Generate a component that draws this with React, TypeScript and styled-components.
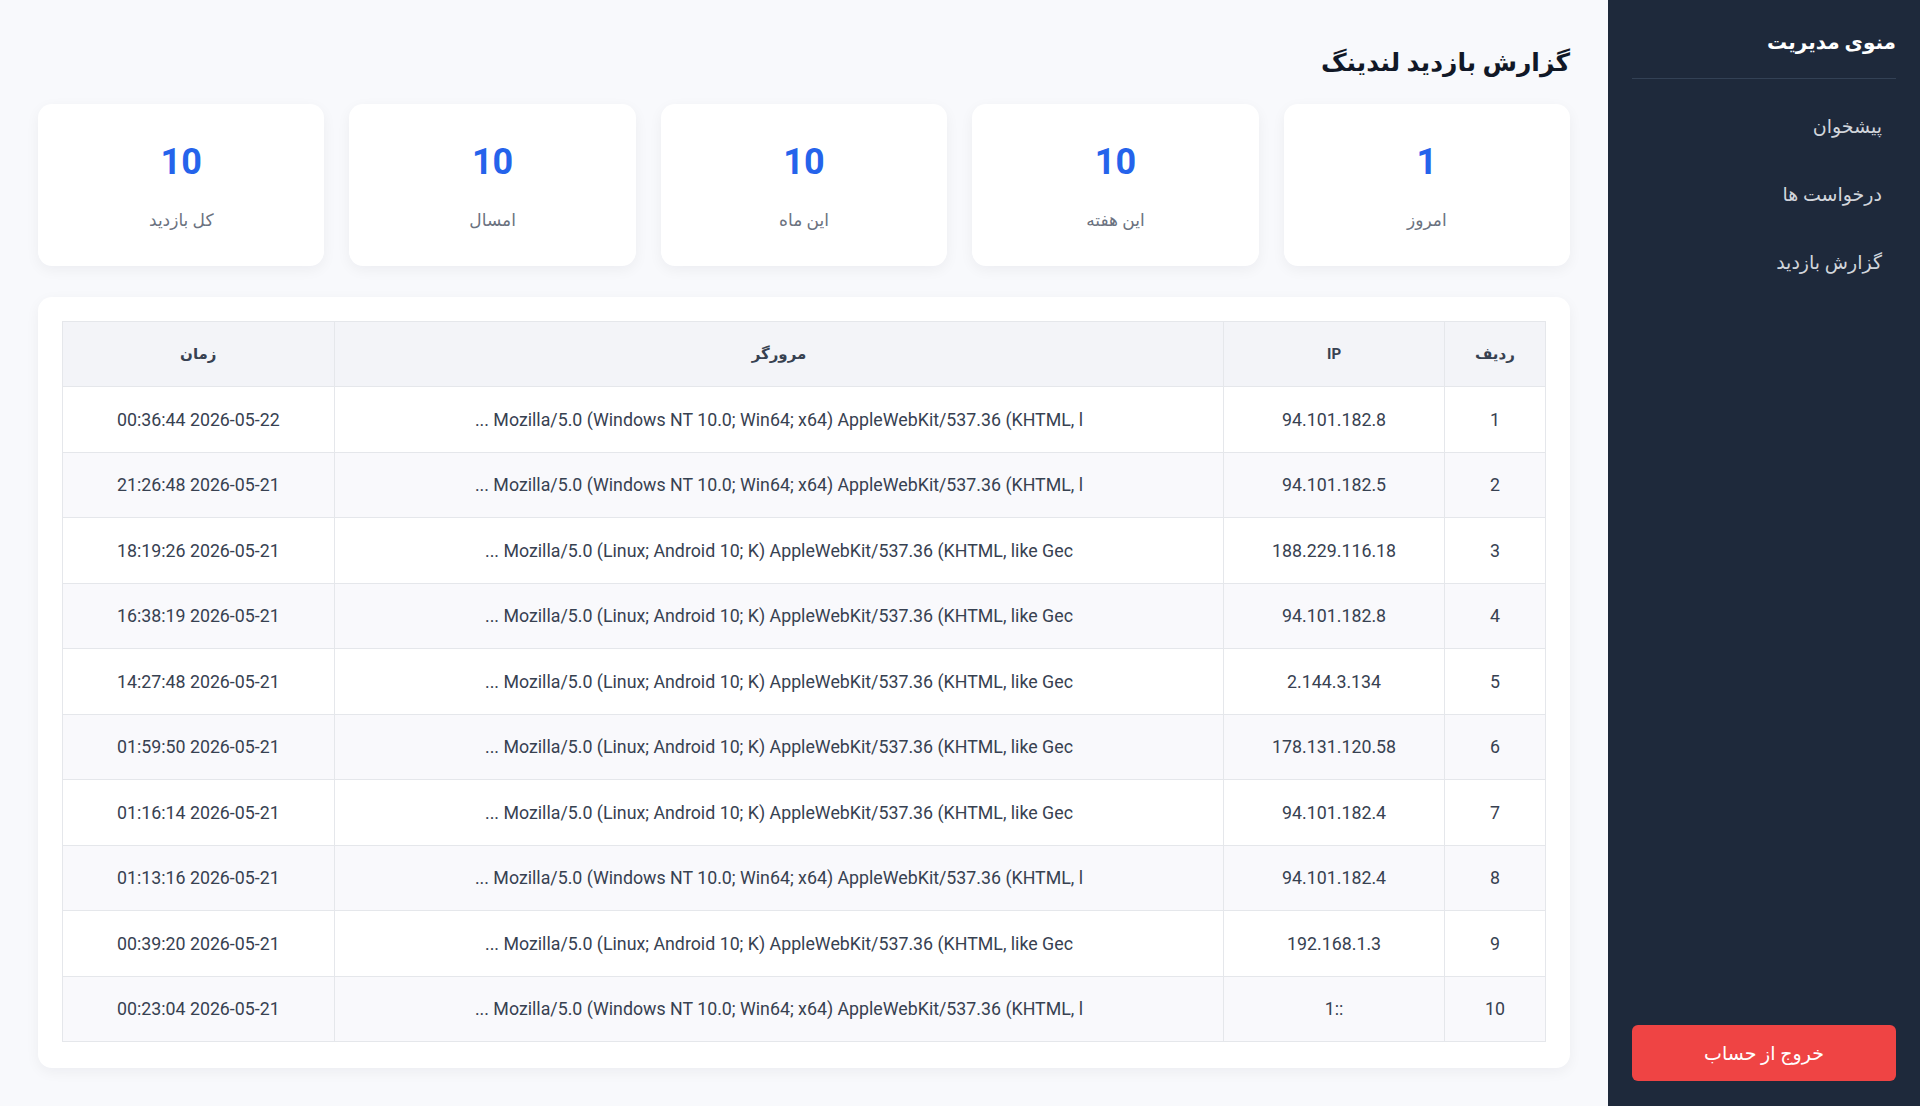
import React from "react";
import styled, { createGlobalStyle } from "styled-components";

const GlobalStyle = createGlobalStyle`
  html, body {
    margin: 0;
    padding: 0;
    background: #f8f9fc;
  }
  body {
    font-family: Roboto, "DejaVu Sans", sans-serif;
    color: #1f2937;
  }
  * { box-sizing: border-box; }
`;

const Layout = styled.div`
  display: flex;
  direction: rtl;
  min-height: 100vh;
  width: 100%;
`;

const Sidebar = styled.aside`
  width: 312px;
  flex-shrink: 0;
  background: #1e293b;
  display: flex;
  flex-direction: column;
  padding: 24px 24px 25px;
  min-height: 100vh;
`;

const SideTitle = styled.div`
  font-size: 20px;
  font-weight: 700;
  line-height: 36px;
  color: #ffffff;
  padding-bottom: 18px;
  border-bottom: 1px solid #334155;
`;

const Nav = styled.nav`
  display: flex;
  flex-direction: column;
  gap: 24px;
  margin-top: 26px;
`;

const NavItem = styled.a`
  display: block;
  padding: 8px 14px;
  font-size: 19px;
  line-height: 28px;
  color: #d1d5db;
  text-decoration: none;
  border-radius: 6px;
`;

const LogoutButton = styled.button`
  margin-top: auto;
  height: 56px;
  width: 100%;
  border: none;
  border-radius: 6px;
  background: #ef4444;
  color: #ffffff;
  font-family: inherit;
  font-size: 19px;
  cursor: pointer;
`;

const Main = styled.main`
  flex: 1;
  min-width: 0;
  padding: 40px 38px 38px;
  display: flex;
  flex-direction: column;
`;

const PageTitle = styled.h1`
  margin: 0 0 19px;
  font-size: 25px;
  line-height: 45px;
  font-weight: 700;
  color: #111827;
`;

const StatsGrid = styled.div`
  display: grid;
  grid-template-columns: repeat(5, 1fr);
  gap: 25px;
`;

const StatCard = styled.div`
  background: #ffffff;
  border-radius: 14px;
  box-shadow: 0 4px 14px rgba(17, 24, 39, 0.05);
  padding: 36px 16px 34px;
  display: flex;
  flex-direction: column;
  align-items: center;
  gap: 24px;
`;

const StatValue = styled.div`
  font-size: 36px;
  line-height: 44px;
  font-weight: 700;
  color: #2563eb;
`;

const StatLabel = styled.div`
  font-size: 17px;
  line-height: 24px;
  color: #6b7280;
`;

const TableCard = styled.section`
  margin-top: 31px;
  background: #ffffff;
  border-radius: 14px;
  box-shadow: 0 4px 14px rgba(17, 24, 39, 0.05);
  padding: 24px 24px 26px;
`;

const Table = styled.table`
  width: 100%;
  border-collapse: collapse;
  table-layout: fixed;
  border: 1px solid #e5e7eb;
`;

const HeadCell = styled.th`
  height: 65px;
  padding: 0 16px;
  background: #f3f4f8;
  font-size: 15px;
  font-weight: 700;
  color: #374151;
  text-align: center;
  border-left: 1px solid #e5e7eb;
`;

const Row = styled.tr<{ $alt: boolean }>`
  background: ${(p) => (p.$alt ? "#f9f9fc" : "#ffffff")};
`;

const Cell = styled.td`
  height: 65.5px;
  padding: 0 16px;
  font-size: 17.8px;
  color: #374151;
  text-align: center;
  white-space: nowrap;
  overflow: hidden;
  border-top: 1px solid #e5e7eb;
  border-left: 1px solid #e5e7eb;
`;

const stats = [
  { value: 1, label: "امروز" },
  { value: 10, label: "این هفته" },
  { value: 10, label: "این ماه" },
  { value: 10, label: "امسال" },
  { value: 10, label: "کل بازدید" },
];

const WIN =
  "Mozilla/5.0 (Windows NT 10.0; Win64; x64) AppleWebKit/537.36 (KHTML, like Gecko) Chrome/120.0.0.0 Safari/537.36";
const AND =
  "Mozilla/5.0 (Linux; Android 10; K) AppleWebKit/537.36 (KHTML, like Gecko) Chrome/120.0.0.0 Mobile Safari/537.36";

const visits = [
  { ip: "94.101.182.8", ua: WIN, time: "2026-05-22 00:36:44" },
  { ip: "94.101.182.5", ua: WIN, time: "2026-05-21 21:26:48" },
  { ip: "188.229.116.18", ua: AND, time: "2026-05-21 18:19:26" },
  { ip: "94.101.182.8", ua: AND, time: "2026-05-21 16:38:19" },
  { ip: "2.144.3.134", ua: AND, time: "2026-05-21 14:27:48" },
  { ip: "178.131.120.58", ua: AND, time: "2026-05-21 01:59:50" },
  { ip: "94.101.182.4", ua: AND, time: "2026-05-21 01:16:14" },
  { ip: "94.101.182.4", ua: WIN, time: "2026-05-21 01:13:16" },
  { ip: "192.168.1.3", ua: AND, time: "2026-05-21 00:39:20" },
  { ip: "::1", ua: WIN, time: "2026-05-21 00:23:04" },
];

const shorten = (s: string) => s.slice(0, 70) + " ...";

export default function App() {
  return (
    <>
      <GlobalStyle />
      <Layout dir="rtl">
        <Sidebar>
          <SideTitle>منوی مدیریت</SideTitle>
          <Nav>
            <NavItem href="#">پیشخوان</NavItem>
            <NavItem href="#">درخواست ها</NavItem>
            <NavItem href="#">گزارش بازدید</NavItem>
          </Nav>
          <LogoutButton>خروج از حساب</LogoutButton>
        </Sidebar>
        <Main>
          <PageTitle>گزارش بازدید لندینگ</PageTitle>
          <StatsGrid>
            {stats.map((s) => (
              <StatCard key={s.label}>
                <StatValue>{s.value}</StatValue>
                <StatLabel>{s.label}</StatLabel>
              </StatCard>
            ))}
          </StatsGrid>
          <TableCard>
            <Table>
              <colgroup>
                <col style={{ width: 101 }} />
                <col style={{ width: 220 }} />
                <col style={{ width: 888 }} />
                <col style={{ width: 271 }} />
              </colgroup>
              <thead>
                <tr>
                  <HeadCell>ردیف</HeadCell>
                  <HeadCell>IP</HeadCell>
                  <HeadCell>مرورگر</HeadCell>
                  <HeadCell>زمان</HeadCell>
                </tr>
              </thead>
              <tbody>
                {visits.map((v, i) => (
                  <Row key={i} $alt={i % 2 === 1}>
                    <Cell>{i + 1}</Cell>
                    <Cell>{v.ip}</Cell>
                    <Cell>{shorten(v.ua)}</Cell>
                    <Cell>{v.time}</Cell>
                  </Row>
                ))}
              </tbody>
            </Table>
          </TableCard>
        </Main>
      </Layout>
    </>
  );
}
